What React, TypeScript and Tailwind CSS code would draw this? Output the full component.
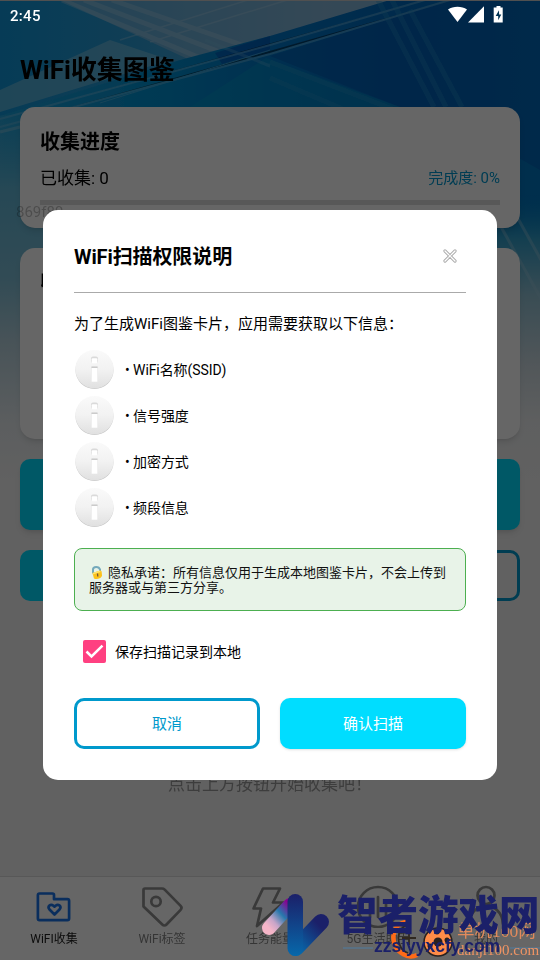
import { ReactNode } from "react";

const permissions = ["WiFi名称(SSID)", "信号强度", "加密方式", "频段信息"];

const Backdrop = () => (
  <svg className="absolute inset-0" width="540" height="480" viewBox="0 0 540 480">
    <defs>
      <linearGradient id="sky" x1="0" y1="0" x2="1" y2="0">
        <stop offset="0" stopColor="#0f95d8" />
        <stop offset="0.25" stopColor="#2a9bd4" />
        <stop offset="0.6" stopColor="#6eaed8" />
        <stop offset="1" stopColor="#5aa0d0" />
      </linearGradient>
      <linearGradient id="deep" x1="0" y1="0" x2="1" y2="0">
        <stop offset="0" stopColor="#1a9fd8" />
        <stop offset="0.3" stopColor="#0090d0" />
        <stop offset="0.5" stopColor="#0078c8" />
        <stop offset="0.75" stopColor="#0068bc" />
        <stop offset="1" stopColor="#0076c0" />
      </linearGradient>
      <linearGradient id="leftFade" x1="0" y1="0" x2="0" y2="1">
        <stop offset="0" stopColor="#45a8d0" stopOpacity="0.2" />
        <stop offset="0.2" stopColor="#5fb4d4" />
        <stop offset="0.45" stopColor="#7dbcd4" />
        <stop offset="0.62" stopColor="#b4d0dc" />
        <stop offset="0.85" stopColor="#e6ebee" />
        <stop offset="1" stopColor="#f2f2f2" />
      </linearGradient>
      <linearGradient id="rightFade" x1="0" y1="0" x2="0" y2="1">
        <stop offset="0" stopColor="#0080c0" stopOpacity="0" />
        <stop offset="0.15" stopColor="#2f9cc8" />
        <stop offset="0.35" stopColor="#8fbfd2" />
        <stop offset="0.6" stopColor="#ccd9e0" />
        <stop offset="0.8" stopColor="#eceeef" />
        <stop offset="1" stopColor="#f2f2f2" />
      </linearGradient>
      <filter id="soft">
        <feGaussianBlur stdDeviation="0.7" />
      </filter>
    </defs>
    <rect width="540" height="480" fill="url(#sky)" />
    <g filter="url(#soft)">
      <path d="M0 90L110 40 170 60 0 112z" fill="#7cc0dc" opacity="0.6" />
      <path d="M60 0H420L270 36L190 60z" fill="#9abcd8" opacity="0.5" />
      <g stroke="#bcd8ea" strokeWidth="5" opacity="0.32">
        <path d="M62 0L205 60" />
        <path d="M84 0L225 54" />
        <path d="M112 0L245 46" />
        <path d="M120 40L280 -10" strokeWidth="1.500" />
        <path d="M150 42L320 -10" strokeWidth="1.500" />
      </g>
      <path d="M0 116L180 60L270 36L390 0H540V250H0z" fill="url(#deep)" />
      <path d="M270 56L450 0H540V170L430 107H400z" fill="#0058b0" opacity="0.5" />
      <path d="M215 53L270 36V50L222 64z" fill="#0052b4" opacity="0.6" />
      <path d="M266 58L400 107H190z" fill="#00a0c8" opacity="0.35" />
      <g stroke="#7cc0e4" strokeWidth="2" opacity="0.45">
        <path d="M0 119L270 45L425 0" />
        <path d="M0 127L270 54L450 0" />
        <path d="M100 103L270 50" strokeWidth="1" />
        <path d="M205 40L270 66" strokeWidth="3" opacity="0.6" />
      </g>
      <g stroke="#2594cc" strokeWidth="5" opacity="0.35">
        <path d="M378 0L434 107" />
        <path d="M392 0L446 107" />
        <path d="M410 10L462 107" />
        <path d="M270 62L395 110" />
        <path d="M270 78L345 110" />
      </g>
    </g>
    <rect y="115" width="270" height="365" fill="url(#leftFade)" />
    <rect x="270" y="195" width="270" height="285" fill="url(#rightFade)" />
    <g stroke="#9cc8dc" strokeWidth="3" opacity="0.4" filter="url(#soft)">
      <path d="M500 225L550 315" />
      <path d="M516 215L555 285" />
      <path d="M0 132L20 127" />
    </g>
    <rect width="540" height="1" fill="#c8c8c8" />
  </svg>
);

const StatusBar = () => (
  <div className="absolute inset-x-0 top-0 flex h-8 items-center justify-between pl-[10px] pr-[35px] text-white">
    <span className="text-[15px] font-medium leading-8 tracking-[0.3px]">2:45</span>
    <svg className="-mt-[2px]" width="58" height="18" viewBox="0 0 58 18" fill="white">
      <path d="M1 3.5C6-.3 15-.3 20 3.5L10.500 16z" />
      <path d="M37 .3V16.500H21z" />
      <path d="M49.500 0h4v1.500h2.200v15H46.700v-15h2.800z" />
      <path d="M52 4.300L48.700 10h2.500v4.200L54.300 8.500h-2.200z" fill="#003354" />
    </svg>
  </div>
);

const InfoIcon = () => (
  <svg width="40" height="40" viewBox="0 0 40 40">
    <defs>
      <linearGradient id="disc" x1="0" y1="0" x2="0" y2="1">
        <stop offset="0" stopColor="#fafafa" />
        <stop offset="0.5" stopColor="#f2f2f2" />
        <stop offset="1" stopColor="#e0e0e0" />
      </linearGradient>
    </defs>
    <circle cx="20.500" cy="20" r="19" fill="#c4c4c4" />
    <circle cx="20.500" cy="19.200" r="19.200" fill="url(#disc)" />
    <rect x="17" y="6.500" width="7" height="6.500" rx="2" fill="#dadada" />
    <rect x="17.700" y="8.200" width="5.600" height="5" rx="1" fill="white" />
    <rect x="17" y="16.500" width="7" height="15.500" rx="1" fill="#e8e8e8" />
    <path d="M17.500 17.200h6" stroke="#c4c4c4" strokeWidth="1.200" />
    <rect x="17.700" y="18" width="5.600" height="13.700" fill="white" />
  </svg>
);

interface TabProps {
  label: string;
  active?: boolean;
  children: ReactNode;
}

const Tab: React.FC<TabProps> = ({ label, active, children }) => (
  <div className="flex flex-1 flex-col items-center pt-[7px]">
    <svg
      width="44"
      height="44"
      viewBox="0 0 44 44"
      fill="none"
      stroke={active ? "#1a73e8" : "#8f8f8f"}
      strokeWidth="2.700"
      strokeLinejoin="round"
      strokeLinecap="round"
    >
      {children}
    </svg>
    <span
      className={
        active
          ? "mt-[3px] whitespace-nowrap text-[12px] leading-4 text-[#222222]"
          : "mt-[3px] whitespace-nowrap text-[12px] leading-4 text-[#858585]"
      }
    >
      {label}
    </span>
  </div>
);

const TabBar = () => (
  <nav className="flex h-[84px] border-t border-[#dcdcdc] bg-white">
    <Tab label="WiFI收集" active>
      <path d="M7.500 9.500h13c1 0 1.500.5 1.500 1.500v4.200h13.500c1 0 1.600.6 1.600 1.600v17.800c0 1-.6 1.600-1.600 1.600h-28c-1 0-1.600-.6-1.600-1.600V11.100c0-1 .6-1.600 1.600-1.600z" />
      <path d="M22.500 30.500l-5-5c-2.500-3 1-6.200 4-3.700l1 .8 1-.8c3-2.500 6.500.7 4 3.700z" />
    </Tab>
    <Tab label="WiFi标签">
      <path d="M5 4.500h17c1 0 2 .4 2.700 1.100l15.700 16c1.500 1.500 1.500 3 0 4.500L26.500 40.500c-1.200 1.300-3 1.300-4.200 0L3.500 22.500V6c0-1 .5-1.500 1.500-1.500z" />
      <circle cx="16" cy="17.500" r="4.700" />
    </Tab>
    <Tab label="任务能量">
      <path d="M15 4.500h17L25 18.500h10.500L9 42l4-17.500H5.500z" />
    </Tab>
    <Tab label="5G生活助手">
      <circle cx="22" cy="23" r="20" />
      <path d="M14 17v16M22 13v20M30 17v16" />
    </Tab>
    <Tab label="我的">
      <circle cx="22" cy="11.500" r="8.500" />
      <path d="M5 40c1-24 33-24 34 0" />
    </Tab>
  </nav>
);

const Collection = () => (
  <main className="relative flex h-full flex-col">
    <h1 className="mx-5 mt-[50px] h-[57px] text-[26px] font-bold leading-[40px]">
      WiFi收集图鉴
    </h1>
    <section className="mx-5 h-[121px] rounded-[15px] bg-white px-5 pt-[20px] shadow-md">
      <h2 className="text-[20px] font-bold leading-[30px]">收集进度</h2>
      <div className="flex h-[43px] items-center justify-between pb-[2px]">
        <span className="text-[17px] leading-6">已收集: 0</span>
        <span className="text-[15px] leading-6 text-[#0097cf]">完成度: 0%</span>
      </div>
      <div className="h-[5px] bg-[#dddddd]" />
    </section>
    <section className="mx-5 mt-5 h-[191px] rounded-[15px] bg-white px-5 pt-[19px] shadow-md">
      <h2 className="text-[20px] font-bold leading-[30px]">收集统计</h2>
    </section>
    <div className="mx-5 mt-5 h-[71px] rounded-[10px] bg-[#00ddff] shadow-md" />
    <div className="mx-5 mt-5 flex h-[51px] gap-5">
      <div className="w-60 rounded-[10px] bg-[#00ddff]" />
      <div className="w-60 rounded-[10px] border-[3px] border-[#0099cc]" />
    </div>
    <p className="mb-auto mt-[171px] text-center text-[17px] leading-6 text-[#999999]">
      点击上方按钮开始收集吧！
    </p>
    <TabBar />
    <span className="absolute left-4 top-[202px] text-[15px] leading-5 text-black/25">869f89</span>
  </main>
);

const PermissionDialog = () => (
  <section className="flex h-[570px] w-[454px] flex-col rounded-[15px] bg-white px-[31px] text-black">
    <header className="flex h-[83px] shrink-0 items-center justify-between border-b border-[#aaaaaa] pt-[10px]">
      <h2 className="pt-[2px] text-[20px] font-bold leading-[30px] tracking-[-0.1px]">
        WiFi扫描权限说明
      </h2>
      <svg className="mr-[9px]" width="14" height="14" viewBox="0 0 14 14" strokeLinecap="round">
        <path d="M2 2l10 10M12 2L2 12" stroke="#acacac" strokeWidth="3.200" />
        <path d="M2 2l10 10M12 2L2 12" stroke="white" strokeWidth="1.300" />
        <path d="M5.200 7L7 5.200 8.800 7 7 8.800z" fill="white" stroke="#b0b0b0" strokeWidth="0.700" />
      </svg>
    </header>
    <p className="mt-[20px] whitespace-nowrap text-[15px] leading-[22px]">
      为了生成WiFi图鉴卡片，应用需要获取以下信息：
    </p>
    <ul className="mt-[15px] flex flex-col gap-[6px]">
      {permissions.map((item) => (
        <li key={item} className="flex h-10 items-center">
          <InfoIcon />
          <span className="ml-[11px] text-[14px] leading-5 tracking-[-0.08px]">• {item}</span>
        </li>
      ))}
    </ul>
    <p className="mt-[20px] h-[63px] whitespace-nowrap rounded-[8px] border border-[#4caf50] bg-[#e8f3e8] px-[14px] pt-[16px] text-[13px] leading-[15px] text-[#111111]">
      <svg className="mr-1 inline-block align-[-3px]" width="15" height="15" viewBox="0 0 15 15">
        <path d="M4 8.500V4.500c0-3.500 6-3.500 7 0V7" fill="none" stroke="#74a9bb" strokeWidth="2" />
        <path d="M3.500 8l7.500-2.500c1 0 1.500.5 1.700 1.500l.3 4c-1.500 2.500-5 4-8 2.500z" fill="#fcc21b" />
        <path d="M3.500 8l7.500-2.500.6 1.500-7.800 2.500z" fill="#ffe36c" />
        <path d="M8.500 8.500l.3 3" stroke="#70533f" strokeWidth="1.300" />
      </svg>
      隐私承诺：所有信息仅用于生成本地图鉴卡片，不会上传到
      <br />
      服务器或与第三方分享。
    </p>
    <label className="ml-[9px] mt-[29px] flex h-[23px] items-center gap-[9px]">
      <svg width="23" height="23" viewBox="0 0 23 23">
        <rect width="23" height="23" rx="2" fill="#ff4081" />
        <path d="M3.500 11.500l5 5L19.500 5.700" fill="none" stroke="white" strokeWidth="2.500" />
      </svg>
      <span className="text-[14px] leading-5">保存扫描记录到本地</span>
    </label>
    <footer className="mt-[35px] flex h-[51px] gap-5 text-[15px]">
      <button className="w-[186px] rounded-[10px] border-[3px] border-[#0099cc] pt-px text-[#0099cc]">
        取消
      </button>
      <button className="w-[186px] rounded-[10px] bg-[#00ddff] pt-px text-white shadow-sm">
        确认扫描
      </button>
    </footer>
  </section>
);

const Watermarks = () => (
  <div className="absolute bottom-0 right-0 h-[76px] w-[290px] overflow-hidden">
    <svg className="absolute inset-0" width="290" height="76" viewBox="250 884 290 76">
      <defs>
        <linearGradient id="arm" x1="0" y1="1" x2="1" y2="0">
          <stop offset="0" stopColor="#f5b5c8" />
          <stop offset="0.25" stopColor="#c8a5c8" />
          <stop offset="0.6" stopColor="#2678ad" />
          <stop offset="1" stopColor="#8a0090" />
        </linearGradient>
        <linearGradient id="stem" x1="0" y1="0" x2="0" y2="1">
          <stop offset="0" stopColor="#1b2069" />
          <stop offset="1" stopColor="#0768aa" />
        </linearGradient>
        <linearGradient id="wing" x1="0" y1="1" x2="1" y2="0">
          <stop offset="0" stopColor="#0768aa" />
          <stop offset="0.9" stopColor="#1b2069" />
        </linearGradient>
      </defs>
      <path d="M269 928L290 905" stroke="url(#arm)" strokeWidth="14" strokeLinecap="round" />
      <path d="M296 948L321 922" stroke="url(#wing)" strokeWidth="16" strokeLinecap="round" />
      <rect x="287.500" y="894" width="15.500" height="62" rx="7.700" fill="url(#stem)" />
      <path d="M343 948h30" stroke="#4f7ca1" />
      <path
        d="M408 922c-18 0-19 25-5 32 5 3 10 3 14 1"
        stroke="#ff6b18"
        strokeWidth="4.500"
        fill="none"
      />
      <path d="M409 925c-14 1-14 24-1 28M402 938h14M409 931v14" stroke="#302820" strokeWidth="1.800" fill="none" />
      <circle cx="438" cy="942" r="14" fill="#ff8b48" stroke="#29211f" strokeWidth="1.500" />
      <circle cx="438" cy="942" r="4.500" fill="#29211f" />
      <circle cx="437" cy="932" r="2.500" fill="#29211f" />
      <circle cx="447" cy="940" r="2.500" fill="#29211f" />
      <circle cx="430" cy="946" r="2.500" fill="#29211f" />
      <path d="M510 948h30" stroke="#4f7ca1" />
    </svg>
    <span className="absolute left-[207px] top-[37px] whitespace-nowrap font-['Liberation_Serif','Noto_Sans_CJK_SC',serif] text-[17.500px] leading-5 text-[#e28a5c]">
      单机100网
    </span>
    <span className="absolute left-[207px] top-[57px] whitespace-nowrap font-['Liberation_Serif',serif] text-[15px] leading-[18px] text-[#f09464]">
      danji100.com
    </span>
    <span className="absolute left-[87px] top-[9px] whitespace-nowrap text-[40.500px] font-black leading-[46px] text-[#1b2069]">
      智者游戏网
    </span>
    <span className="absolute left-[124px] top-[52px] whitespace-nowrap font-['Liberation_Sans',sans-serif] text-[17.500px] font-bold leading-5 text-[#1b2069]">
      zzslyyxcfy.com
    </span>
  </div>
);

const App = () => {
  return (
    <div className="relative h-[960px] w-[540px] overflow-hidden bg-[#f2f2f2] font-[Roboto,'Noto_Sans_CJK_SC',sans-serif] text-black">
      <Backdrop />
      <Collection />
      <div className="absolute inset-0 flex items-center justify-center bg-black/60 pt-[30px]">
        <PermissionDialog />
      </div>
      <StatusBar />
      <Watermarks />
    </div>
  );
};

export default App;
